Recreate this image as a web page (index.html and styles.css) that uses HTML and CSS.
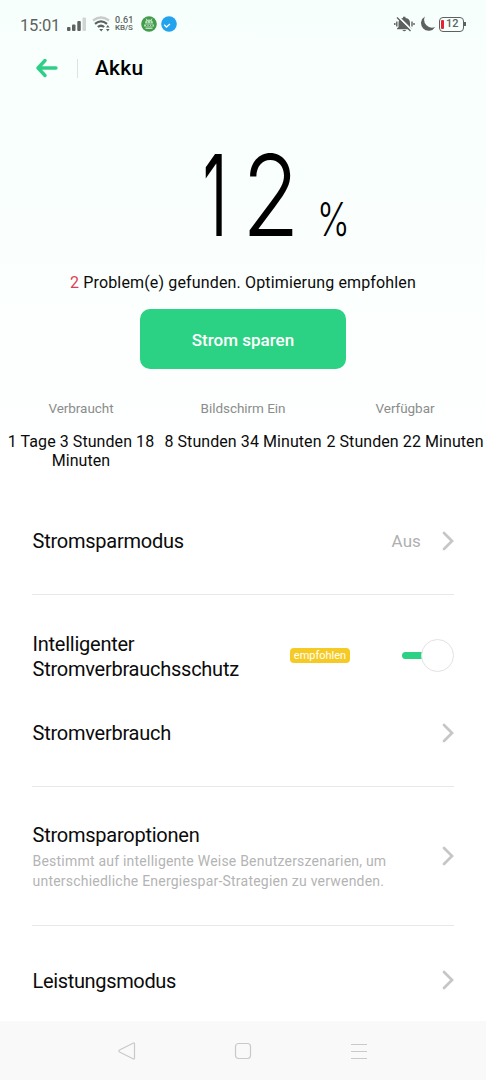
FILE: index.html
```html
<!DOCTYPE html>
<html lang="de">
<head>
<meta charset="utf-8">
<title>Akku</title>
<link rel="stylesheet" href="styles.css">
</head>
<body>
<main class="screen">
  <header class="status">
    <div class="status-left">
      <span class="clock">15:01</span>
      <svg class="signal" width="20" height="15" viewBox="0 0 20 15"><g fill="#5d625f"><rect x="0" y="10" width="3.5" height="4" rx="1"/><rect x="5" y="7.500" width="3.500" height="6.500" rx="1"/><rect x="10.300" y="4" width="3.500" height="10" rx="1"/></g><rect x="15.500" y="0.500" width="3.500" height="13.500" rx="1" fill="#d0d5d2"/></svg>
      <svg class="wifi" width="20" height="16" viewBox="0 0 20 16" fill="none" stroke-width="2.200"><path d="M1 4.500Q9 -1.500 17 4.500" stroke="#c8cdca"/><path d="M3 7.800Q9 3 15 7.800M5.800 11Q9 8.500 12.200 11" stroke="#5d625f"/><path d="M7.200 13h4l-2 2.500zM14 11.500l1.800-2.500 1.800 2.500zM14 13h3.600L15.800 15.500z" fill="#5d625f"/></svg>
      <span class="speed"><span>0.61</span><span class="unit">KB/S</span></span>
      <svg class="app" width="16" height="16" viewBox="0 0 16 16"><circle cx="8" cy="8" r="7.800" fill="#419c4b"/><path d="M4 7.500a4 4 0 0 1 8 0zM3 8.500h10v2H3zM4.500 11.500h7v1.500h-7z" fill="#b9dcba"/><path d="M5 2.500l1 2M11 2.500l-1 2" stroke="#b9dcba"/><path d="M6 6h1M9 6h1M5 9.500h1.500M7.500 9.500h1.500M10 9.500h1.500" stroke="#419c4b"/></svg>
      <svg class="tick" width="16" height="16" viewBox="0 0 16 16"><circle cx="8" cy="8" r="7.800" fill="#23a3ed"/><path d="M3.200 8.800l2.200 2.200L9 8" fill="none" stroke="#fff" stroke-width="1.300"/></svg>
    </div>
    <div class="status-right">
      <svg width="21" height="16" viewBox="0 0 21 16"><path d="M4.500 11V7Q4.500 2.500 9 2V.8h2.500V2Q16 2.500 16 7v4l1.500 1.500v.8H3v-.8zM8.300 14h4q-2 2.500-4 0" fill="#5d625f"/><path d="M4 .5l14 14" stroke="#f8fffc" stroke-width="2"/><path d="M2.800 5.500v5M.8 7v2M18 5.500v5M20 7v2M3 1.500l13.500 13.500" stroke="#5d625f" stroke-width="1.400"/></svg>
      <svg class="moon" width="16" height="16" viewBox="0 0 16 16"><path d="M5 .5A7.600 7.600 0 1 0 15.200 11 7.800 7.800 0 0 1 5 .5z" fill="#5d625f"/></svg>
      <span class="battery"><i></i>12</span>
    </div>
  </header>
  <nav class="titlebar">
    <svg width="22" height="20" viewBox="0 0 22 20" fill="none" stroke="#2fce87" stroke-width="3.300" stroke-linecap="round" stroke-linejoin="round"><path d="M9 2.500L2 10l7 7.500M2 10h18"/></svg>
    <span class="rule"></span>
    <h1>Akku</h1>
  </nav>
  <section class="summary">
    <div class="level"><span class="one">1</span><span class="two">2</span><span class="percent">%</span></div>
    <p class="problems"><b>2</b> Problem(e) gefunden. Optimierung empfohlen</p>
    <button class="save">Strom sparen</button>
    <div class="stats">
      <div><small>Verbraucht</small><p>1 Tage 3 Stunden 18<br>Minuten</p></div>
      <div><small>Bildschirm Ein</small><p>8 Stunden 34 Minuten</p></div>
      <div><small>Verfügbar</small><p>2 Stunden 22 Minuten</p></div>
    </div>
  </section>
  <section class="list">
    <div class="row mode"><h2>Stromsparmodus</h2><span class="value">Aus</span><svg class="chev" viewBox="0 0 12 20"><path d="M2 2l8 8-8 8"/></svg></div>
    <div class="row guard"><h2>Intelligenter<br>Stromverbrauchsschutz</h2><span class="badge">empfohlen</span><span class="switch"><i></i></span></div>
    <div class="row usage"><h2>Stromverbrauch</h2><svg class="chev" viewBox="0 0 12 20"><path d="M2 2l8 8-8 8"/></svg></div>
    <div class="row options"><div><h2>Stromsparoptionen</h2><p>Bestimmt auf intelligente Weise Benutzerszenarien, um<br>unterschiedliche Energiespar-Strategien zu verwenden.</p></div><svg class="chev" viewBox="0 0 12 20"><path d="M2 2l8 8-8 8"/></svg></div>
    <div class="row power"><h2>Leistungsmodus</h2><svg class="chev" viewBox="0 0 12 20"><path d="M2 2l8 8-8 8"/></svg></div>
  </section>
  <footer class="navbar">
    <svg width="18" height="18" viewBox="0 0 18 18"><path d="M15.500 1L1.500 8q-1.300 1 0 2l14 7q1 .4 1-1V2q0-1.400-1-1z"/></svg>
    <svg width="18" height="18" viewBox="0 0 18 18"><rect x="1.500" y="1.500" width="15" height="15" rx="3"/></svg>
    <svg width="18" height="18" viewBox="0 0 18 18"><path d="M1 2.500h16M1 9.500h16M1 16.500h16"/></svg>
  </footer>
</main>
</body>
</html>
```
FILE: styles.css
```css
* { box-sizing: border-box; }
body { margin: 0; font-family: Roboto, sans-serif; color: #0b0b0b; }
h1, h2, p { margin: 0; font-weight: 400; }
svg { display: block; flex: none; }
.screen { width: 486px; height: 1080px; display: flex; flex-direction: column; overflow: hidden; background: linear-gradient(#f7fffc 0, #fafffd 240px, #fff 480px); }
.status { height: 48px; display: flex; justify-content: space-between; padding: 0 22px 0 20px; color: #5d625f; }
.status-left, .status-right { display: flex; align-items: center; }
.clock { width: 47px; font-size: 16.5px; letter-spacing: -.2px; padding-top: 2px; }
.wifi { margin-left: 5px; }
.speed { width: 22px; margin-left: 3px; display: flex; flex-direction: column; font-size: 9px; line-height: 8px; font-weight: 500; letter-spacing: .2px; white-space: nowrap; }
.unit { font-size: 8px; letter-spacing: -.1px; }
.app { margin-left: 4px; }
.tick { margin-left: 4px; }
.moon { margin: 0 3px 0 5px; }
.battery { position: relative; width: 25px; height: 15px; border: 1.5px solid #5d625f; border-radius: 4px; display: flex; align-items: center; gap: 2px; padding-left: 1px; font-size: 11px; font-weight: 500; line-height: 14px; }
.battery i { width: 3px; height: 9px; border-radius: 1px; background: #e42334; }
.battery::after { content: ""; position: absolute; right: -3px; top: 4px; width: 2px; height: 4px; background: #5d625f; }
.titlebar { height: 40px; display: flex; align-items: center; padding-left: 36px; }
.rule { width: 1px; height: 19px; background: #dde3e0; margin: 0 17px 0 19px; }
h1 { font-size: 21px; font-weight: 500; line-height: 26px; letter-spacing: .2px; color: #000; }
.summary { height: 416px; display: flex; flex-direction: column; align-items: center; flex: none; }
.level { width: 100%; height: 181px; display: flex; align-items: baseline; padding: 51px 0 0 203px; color: #000; font-family: Inter, Roboto, sans-serif; }
.one, .two { font-size: 113px; line-height: 113px; transform-origin: left; }
.one { width: 39px; font-weight: 400; transform: scaleX(.52); }
.two { width: 75px; font-weight: 300; transform: scaleX(.83); }
.percent { font-size: 46px; line-height: 46px; font-weight: 300; transform: scaleX(.76); transform-origin: left; }
.problems { font-size: 16px; line-height: 28px; letter-spacing: .15px; white-space: nowrap; }
.problems b { font-weight: 400; color: #dc3f52; }
.save { width: 206px; height: 60px; margin-top: 12px; flex: none; border: 0; border-radius: 10px; background: #2bd283; color: #fff; font: 500 17px/20px Roboto, sans-serif; padding-top: 3px; }
.stats { width: 486px; display: grid; grid-template-columns: repeat(3, 162px); text-align: center; margin-top: 30px; }
.stats small { display: block; font-size: 13.5px; line-height: 18px; letter-spacing: -.05px; color: #8b8d8c; }
.stats p { font-size: 16px; line-height: 19px; margin-top: 15px; letter-spacing: .07px; white-space: nowrap; }
.list { height: 517px; flex: none; }
.row { display: flex; align-items: center; margin: 0 32px 0 32px; }
.row h2 { font-size: 20px; line-height: 25px; letter-spacing: -.25px; padding: 1px 0 0 .6px; white-space: nowrap; }
.chev { width: 12px; height: 20px; margin-left: auto; fill: none; stroke: #c6c6c6; stroke-width: 2.7; stroke-linecap: round; }
.mode { height: 91px; padding-bottom: 17px; border-bottom: 1px solid #e8e8e8; }
.mode h2 { padding-top: 2px; }
.value { margin-left: auto; margin-right: 21px; font-size: 17px; color: #b0b0b0; letter-spacing: .1px; }
.value + .chev { margin-left: 0; }
.guard { height: 122px; padding-bottom: 1px; }
.guard h2 { padding-top: 3px; }
.badge { margin-left: auto; margin-right: 52px; width: 60px; height: 15px; border-radius: 4px; background: #f6ca25; color: #fff; font-size: 11px; line-height: 16px; text-align: center; }
.switch { width: 52px; height: 33px; display: flex; align-items: center; position: relative; }
.switch::before { content: ""; width: 28px; height: 7px; border-radius: 4px; background: #2bd283; }
.switch i { position: absolute; right: 0; width: 33px; height: 33px; border: 1px solid #e2e2e2; border-radius: 50%; background: #fff; }
.usage { height: 70px; padding-bottom: 38px; border-bottom: 1px solid #e8e8e8; }
.options { height: 139px; border-bottom: 1px solid #e8e8e8; }
.options > div { padding-top: 1px; }
.options p { font-size: 14px; line-height: 20px; margin-top: 3px; padding-left: .5px; color: #b4b4b4; letter-spacing: .22px; white-space: nowrap; }
.power { height: 95px; padding-top: 13px; }
.power h2 { padding-top: 2px; letter-spacing: -.35px; }
.navbar { height: 59px; flex: none; background: #f9f9f9; display: flex; align-items: center; justify-content: center; gap: 98px; }
.navbar svg { fill: none; stroke: #c9c9c9; stroke-width: 1.2; stroke-linejoin: round; }
```
